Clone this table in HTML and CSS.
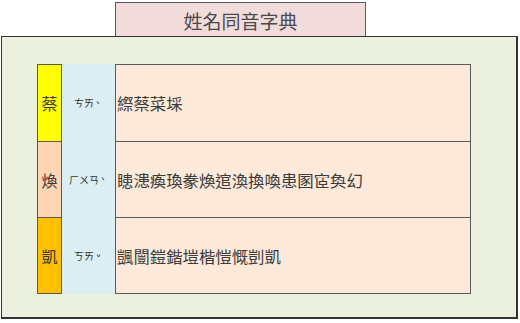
FILE: index.html
```html
<!DOCTYPE html>
<html lang="zh-Hant">
<head>
<meta charset="utf-8">
<link rel="stylesheet" href="styles.css">
</head>
<body>
<div class="title">姓名同音字典</div>
<div class="board">
  <div class="table">
    <div class="char c-yellow">蔡</div>
    <div class="zy">ㄘㄞ<span class="tone">ˋ</span></div>
    <div class="list">縩蔡菜埰</div>

    <div class="char c-peach">煥</div>
    <div class="zy">ㄏㄨㄢ<span class="tone">ˋ</span></div>
    <div class="list">瞣漶瘓瑍豢煥逭渙換喚患圂宧奐幻</div>

    <div class="char c-orange last">凱</div>
    <div class="zy">ㄎㄞ<span class="tone">ˇ</span></div>
    <div class="list last">颽闓鎧鍇塏楷愷慨剴凱</div>
  </div>
</div>
</body>
</html>
```
FILE: styles.css
```css
html, body {
  margin: 0;
  padding: 0;
  background: #ffffff;
}
body {
  width: 520px;
  height: 323px;
  font-family: "Noto Sans CJK TC", "Noto Sans CJK SC", sans-serif;
  color: #3c3c3c;
  overflow: hidden;
}
.title {
  box-sizing: border-box;
  margin: 2px 0 0 115px;
  width: 251px;
  height: 34px;
  border: 1px solid #5a5a5a;
  border-bottom: none;
  background: #f2dcdb;
  display: flex;
  align-items: center;
  justify-content: center;
  font-size: 19px;
  color: #4a4a4a;
  padding-top: 2px;
}
.board {
  box-sizing: border-box;
  margin-left: 1px;
  width: 517px;
  height: 283px;
  border: 1px solid #333333;
  border-right: 2px solid #333333;
  border-bottom: 2px solid #333333;
  background: #ebf1de;
  padding: 27px 0 0 35px;
}
.table {
  display: grid;
  grid-template-columns: 25px 53px 356px;
  grid-template-rows: 77px 76px 77px;
}
.char, .list {
  box-sizing: border-box;
  border: 1px solid #5a5a5a;
  border-bottom: none;
  display: flex;
  align-items: center;
}
.char.last, .list.last {
  border-bottom: 1px solid #5a5a5a;
}
.char {
  justify-content: center;
  font-size: 16px;
}
.c-yellow { background: #ffff00; }
.c-peach { background: #fcd5b4; }
.c-orange { background: #ffc000; }
.zy {
  background: #daeef3;
  display: flex;
  align-items: center;
  justify-content: center;
  font-size: 10px;
  color: #333333;
}
.tone {
  display: inline-block;
  width: 9px;
  text-align: center;
  font-family: "DejaVu Sans", sans-serif;
  font-size: 12px;
  transform: translateY(5px);
}
.list {
  background: #fde9d9;
  font-size: 16.4px;
  padding-left: 1px;
  white-space: nowrap;
}
```
